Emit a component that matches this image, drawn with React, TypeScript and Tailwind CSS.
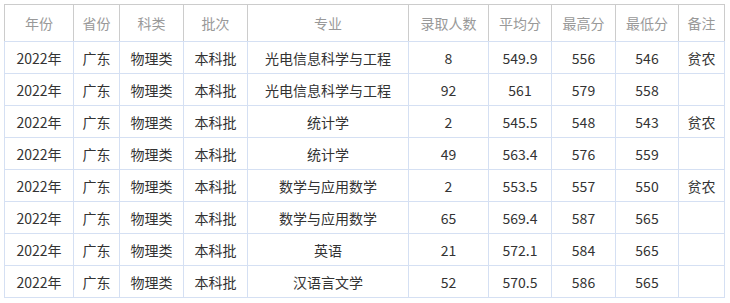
import React from 'react';

const HEADERS = ['年份', '省份', '科类', '批次', '专业', '录取人数', '平均分', '最高分', '最低分', '备注'];
const WIDTHS = [69, 46, 64, 64, 161, 80, 63, 64, 63, 46];

const ROWS = [
  ['光电信息科学与工程', '8', '549.9', '556', '546', '贫农'],
  ['光电信息科学与工程', '92', '561', '579', '558', ''],
  ['统计学', '2', '545.5', '548', '543', '贫农'],
  ['统计学', '49', '563.4', '576', '559', ''],
  ['数学与应用数学', '2', '553.5', '557', '550', '贫农'],
  ['数学与应用数学', '65', '569.4', '587', '565', ''],
  ['英语', '21', '572.1', '584', '565', ''],
  ['汉语言文学', '52', '570.5', '586', '565', ''],
];

export default function App() {
  return (
    <div className="bg-white p-1 w-[730px] h-[303px]" style={{ fontFamily: '"Noto Sans CJK SC", "Noto Sans", sans-serif' }}>
      <table className="table-fixed border-collapse w-[720px] text-[14px]">
        <colgroup>
          {WIDTHS.map((w, i) => (
            <col key={i} style={{ width: w }} />
          ))}
        </colgroup>
        <thead>
          <tr>
            {HEADERS.map(h => (
              <th
                key={h}
                className="h-[37px] p-0 font-normal text-center text-[#999999] border border-[#cccccc] border-b-[#d5e0f3] leading-none"
              >
                {h}
              </th>
            ))}
          </tr>
        </thead>
        <tbody>
          {ROWS.map((r, i) => (
            <tr key={i}>
              {['2022年', '广东', '物理类', '本科批', ...r].map((c, j) => (
                <td
                  key={j}
                  className="h-[32px] p-0 text-center text-[#333333] border border-[#d5e0f3] leading-none"
                >
                  {c}
                </td>
              ))}
            </tr>
          ))}
        </tbody>
      </table>
    </div>
  );
}
